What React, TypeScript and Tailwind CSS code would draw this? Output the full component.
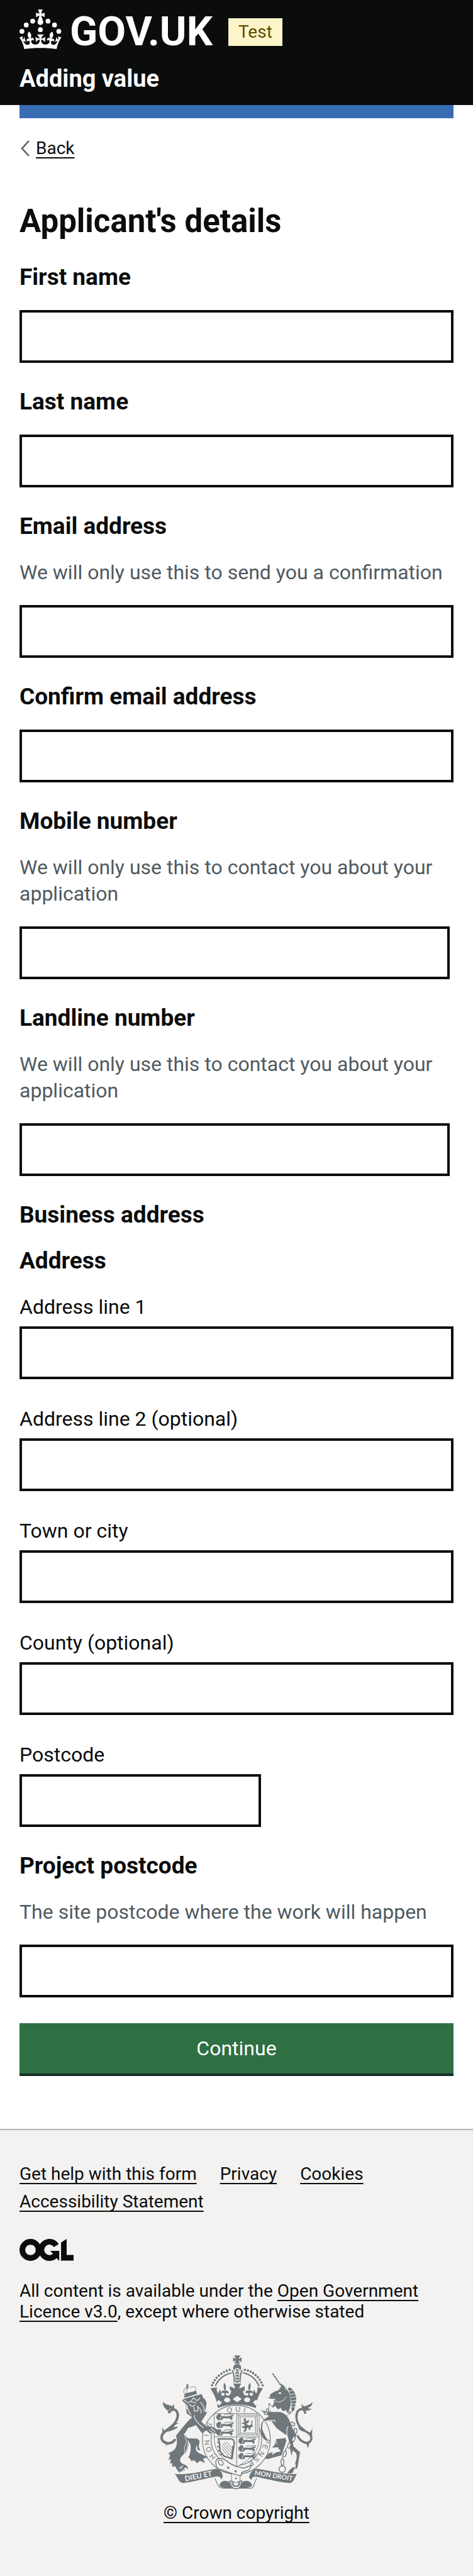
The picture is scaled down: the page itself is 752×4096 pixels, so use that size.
import React from "react";

const link = "underline decoration-2 underline-offset-[5px] [text-decoration-skip-ink:none]";

function Crown() {
  return (
    <svg aria-hidden="true" viewBox="0 0 64 60" className="h-[63px] w-[67px] shrink-0 fill-white">
      <circle cx="20" cy="17.6" r="3.7" />
      <circle cx="10.2" cy="23.5" r="3.7" />
      <circle cx="3.7" cy="33.2" r="3.7" />
      <circle cx="31.7" cy="30.6" r="3.7" />
      <circle cx="43.3" cy="17.6" r="3.7" />
      <circle cx="53.2" cy="23.5" r="3.7" />
      <circle cx="59.7" cy="33.2" r="3.7" />
      <path d="M33.1,9.8c.2-.1.3-.3.5-.5l4.6,2.4v-6.8l-4.6,1.5c-.1-.2-.3-.3-.5-.5l1.9-5.9h-6.7l1.9,5.9c-.2.1-.3.3-.5.5l-4.6-1.5v6.8l4.6-2.4c.1.2.3.3.5.5l-2.6,8c-.9,2.8,1.2,5.7,4.1,5.7h0c3,0,5.1-2.9,4.1-5.7l-2.6-8ZM37,37.9s-3.4,3.8-4.1,6.1c2.2,0,4.2-.5,6.4-2.8l-.7,8.5c-2-2.8-4.4-4.1-5.7-3.8.1,3.1.5,6.7,5.8,7.2,3.7.3,6.7-1.5,7-3.8.4-2.6-2-4.3-3.7-1.6-1.4-4.5,2.4-6.1,4.9-3.2-1.9-4.5-1.8-7.7,2.4-10.9,3,4,2.6,7.3-1.2,11.1,2.4-1.3,6.2,0,4,4.6-1.2-2.8-3.7-2.2-4.2.2-.3,1.7.7,3.7,3,4.2,1.9.3,4.7-.9,7-5.9-1.3,0-2.4.7-3.9,1.7l2.4-8c.6,2.3,1.4,3.7,2.2,4.5.6-1.6.5-2.8,0-5.3l5,1.8c-2.6,3.6-5.2,8.7-7.3,17.5-7.4-1.1-15.7-1.7-24.5-1.7h0c-8.8,0-17.1.6-24.5,1.7-2.1-8.9-4.7-13.9-7.3-17.5l5-1.8c-.5,2.5-.6,3.7,0,5.3.8-.8,1.6-2.3,2.2-4.5l2.4,8c-1.5-1-2.6-1.7-3.9-1.7,2.3,5,5.2,6.2,7,5.9,2.3-.4,3.3-2.4,3-4.2-.5-2.4-3-3.1-4.2-.2-2.2-4.6,1.6-6,4-4.6-3.7-3.7-4.2-7.1-1.2-11.1,4.2,3.2,4.3,6.4,2.4,10.9,2.5-2.8,6.3-1.3,4.9,3.2-1.8-2.7-4.1-1-3.7,1.6.3,2.3,3.3,4.1,7,3.8,5.4-.5,5.7-4.2,5.8-7.2-1.3-.2-3.7,1-5.7,3.8l-.7-8.5c2.2,2.3,4.2,2.7,6.4,2.8-.7-2.3-4.1-6.1-4.1-6.1h10.6,0Z" />
    </svg>
  );
}

/* Open Government Licence mark: a ring, an open ring with an arrow, and an angled bar */
function LicenceMark() {
  return (
    <svg role="img" aria-label="Open Government Licence" viewBox="0 0 483 196" className="h-[35px] w-[86px] fill-[#0b0c0c] stroke-[#0b0c0c]">
      <circle cx="98" cy="98" r="72.5" fill="none" strokeWidth="51" />
      <path d="M329 59A72.5 72.5 0 1 0 318 150" fill="none" strokeWidth="51" />
      <path stroke="none" d="M275 106h80v88h-3l-19-22-42 -22 8 -17z" />
      <path stroke="none" d="M371 32 421 0v143h62v51H371z" />
    </svg>
  );
}

const crownArc = [
  [438, 292], [446, 274], [457, 256], [470, 240], [485, 225], [502, 212], [520, 201], [539, 192], [559, 185],
  [663, 185], [684, 190], [703, 198], [720, 208], [737, 221], [752, 236], [765, 253], [776, 272], [785, 292],
];
const lionsAt = [
  [480, 492], [480, 546], [480, 598], [632, 655], [632, 708], [632, 760],
];

/* Passant lion used in the quarters of the shield */
function SmallLion({ x, y }: { x: number; y: number }) {
  return (
    <g transform={`translate(${x} ${y})`}>
      <path d="M-14 8l10-4 4-8 14 0 8 6-2 10-8 8 6 6-10 8-16-4-8-8 6-4z" />
      <path d="M18 14c20-8 40 4 60-4l22-8 6 8-14 6 8 8-6 14-12-4 4-8c-20 4-36-4-52 0l-8 12-14 2 8-12z" />
      <path d="M40 4c16-10 36 0 52-8 10-2 16 4 14 10" fill="none" stroke="#6f777b" strokeWidth="4" />
      <path d="M-8 32l14-4 10 8-14 4z" />
    </g>
  );
}

function RoyalArms() {
  return (
    <svg aria-hidden="true" viewBox="84 86 1044 918" className="h-[213px] w-[242px] fill-[#6f777b]">
      {/* crown */}
      <path d="M590 87h44c-8 8-12 16-13 24 6-2 12-6 20-12v34c-8-7-14-10-20-12 1 8 4 14 12 22h-44c8-8 11-14 12-22-6 2-12 5-18 12V99c7 6 12 10 18 12-1-8-4-16-11-24z" />
      <path d="M611 145c18 0 28 14 27 28-1 8-4 14-8 18-2-12-10-18-19-18s-17 6-19 18c-5-4-8-10-8-18 0-14 10-28 27-28z" />
      {crownArc.map(([x, y]) => <circle key={`${x}`} cx={x} cy={y} r="8" />)}
      {[188, 206, 226, 246, 266].map((y) => <rect key={y} x="603" y={y - 7} width="17" height="14" rx="5" />)}
      <g fill="none" stroke="#6f777b" strokeWidth="9">
        <path d="M461 296C480 252 520 216 572 206" />
        <path d="M762 300C742 252 702 214 650 206" />
        <path d="M576 188c14 22 15 50 15 84M645 188c-13 22-15 50-15 84" />
        <path d="M600 196v76M622 196v76" strokeWidth="3" />
      </g>
      <path d="M432 312l40-6c-4 12-2 30 8 42l14-28c10 28 4 44 20 44 12-2 14-18 2-22-6 0-10 6-12 8-8-16 8-30 22-20-10-20-12-40-4-56 12 14 16 34 6 56 14-8 30 4 22 22-4-10-14-10-18-2 0 10 8 16 18 12 16-4 18-20 20-36l-10 0v-28l36 16c-1-12-4-22-14-34h58c-10 12-14 22-14 34l36-16v36l-12-8c2 16 4 32 20 36 10 4 18-2 18-12-4-8-14-8-18 2-8-18 8-30 22-22-10-22-6-42 6-56 8 16 6 36-4 56 14-10 30 4 22 20-2-2-6-8-12-8-12 4-10 20 2 22 16 0 10-16 20-44l14 28c10-12 12-30 8-42l40 6c-24 30-44 80-50 136-40-18-90-24-130-24s-90 6-130 24c-6-56-30-106-52-136z" />
      <g fill="#f3f2f1">
        <ellipse cx="542" cy="392" rx="21" ry="16" />
        <ellipse cx="679" cy="391" rx="21" ry="16" />
        <path d="M582 386l29-20 29 20-29 20zM468 416l14-22 22 14-14 20zM756 412l-14-20-22 14 14 22z" stroke="#f3f2f1" strokeWidth="3" />
        <path d="M598 340l-22-8v-14l28 8-8-36h30l-8 36 28-8v14l-24 8 14 24h-50z" fill="#6f777b" />
      </g>
      {/* garter */}
      <ellipse cx="605" cy="665" rx="233" ry="236" fill="#f3f2f1" stroke="#6f777b" strokeWidth="5" />
      <ellipse cx="605" cy="665" rx="174" ry="176" fill="#f3f2f1" stroke="#6f777b" strokeWidth="5" />
      <g fontFamily="Liberation Sans, sans-serif" fontSize="48" textAnchor="middle">
        <text transform="translate(449 777) rotate(-128)" y="8">H</text>
        <text transform="translate(420 730) rotate(-112)" y="12">O</text>
        <text transform="translate(404 684) rotate(-98)" y="16">N</text>
        <text transform="translate(400 634) rotate(-86)" y="16">I</text>
        <text transform="translate(424 566) rotate(-62)" y="12">S</text>
        <text x="558" y="478" transform="rotate(-5 558 466)">Q</text>
        <text x="616" y="474">U</text>
        <text x="660" y="478" transform="rotate(12 660 466)">I</text>
        <text transform="translate(815 676) rotate(98)" y="16">P</text>
        <text transform="translate(802 714) rotate(110)" y="16">E</text>
        <text transform="translate(776 762) rotate(124)" y="16">N</text>
        <text transform="translate(742 800) rotate(138)" y="16">S</text>
        <text transform="translate(706 828) rotate(150)" y="16">E</text>
      </g>
      {/* shield */}
      <path d="M453 485h308v170c0 86-56 150-154 194-98-44-154-108-154-194z" fill="#f3f2f1" stroke="#6f777b" strokeWidth="4" />
      <path d="M607 485v360M453 646h308" fill="none" stroke="#6f777b" strokeWidth="4" />
      {lionsAt.map(([x, y]) => <SmallLion key={`${x}-${y}`} x={x} y={y} />)}
      <g fill="none" stroke="#6f777b" strokeWidth="4">
        <path d="M620 496h128v136H620zM632 508h104v112H632z" />
        <path d="M612 490l18 18M756 490l-18 18M612 638l18-18M756 638l-18-18" />
      </g>
      <path d="M652 524l12-8 8 10-6 10 22-4 8-12-8 28-16 8 20 12 18-8-4-18 10-14-2 28 4 18-18 10 2 14-14-2 4-12-18 2 2 14-14 12-10-4 12-14-8-12-10 4-2-12 20-4-8-14-10 2-4-12 20 0z" />
      <g fill="none" stroke="#6f777b">
        <path d="M482 660h88c14 0 18 8 20 22l-2 28-18 84-48-16-30-34-2-52z" strokeWidth="10" />
        <path d="M474 684h18M472 712h18M478 740h18M488 768h18" strokeWidth="8" />
        <path d="M508 690l66 70M520 682l56 60M536 678l44 46M506 708l60 66M506 728l50 54" strokeWidth="4" />
        <path d="M584 708l-10 90" strokeWidth="14" />
      </g>
      {/* lion supporter */}
      <g transform="translate(75 75)">
        <path d="M222 440C190 468 150 522 116 562c12 40 8 84-18 102l-34 18 12 14-12 32 16-6-4 32 14-4v28l18-8 16 26 16 22 8-14 14 6-2-14 20 4-12-16 20-2 12 14c0-22-12-32-42-42-20-16-18-36 0-52l12-14c28-24 26-34 32-68l-4-44-26-20 26-46 56-20 40 56 30-20 28 24 12-10 22 6c16-6 20-14 14-26l-34-18-46-6-30-30 42-66-34 2z" />
        <path d="M172 548l24 30 4 32-18 84c-12-36-12-60 8-86z" stroke="#f3f2f1" strokeWidth="4" />
        <path d="M190 580l72 2 16 16-6 40 10 26-18-4-6-34c-10 26-8 40 14 54l64 30-34 10 12 30-34-16-18 18-24-22-16 8c-4-14-14-22-22-26 12-18 20-50 16-88z" />
        <path d="M112 586c-32 46-80 28-92 2-14-40 30-60 58-82 40-30 62-78 44-108-14-26-48-14-56 10" fill="none" stroke="#6f777b" strokeWidth="17" />
        <path d="M26 328c24 34 54 14 78 46l-36 8 2 16c-30-20-44-34-44-70zM102 340l2 38-26-10c12-4 22-12 24-28zM22 502l2 54 24-18c-14-10-20-20-26-36zM62 512c20-26 42-38 74-36-22 8-30 14-36 30 10-6 22-6 30-4-18 18-42 24-74 34zM44 640l12-34 26 4c-16 8-30 14-38 30z" />
        <path d="M160 320l12-12 92-26 28-6 8 22c18 14 22 28 26 42l-6 34-8 38-40 18-36 12-46-32-12-70-20-18z" />
        <path d="M172 298l4-24 78-20 6 22-84 26z" />
        <path d="M174 274c-12-24 4-46 24-34m-8 34c-8-20 0-32 14-38m44 20c14-22-14-40-32-22" fill="none" stroke="#6f777b" strokeWidth="5" strokeDasharray="6 3" />
        <path d="M187 208l14 8-4 22-12-10 8-8z" stroke="#6f777b" strokeWidth="4" />
        <g fill="none" stroke="#f3f2f1" strokeWidth="5">
          <path d="M170 318l28 18 22-10 16-24 24 20 22-18M220 330l34 8M206 346l20 16 22-10M238 366l6 30 24-6-4-32M190 350c4 30 12 50 30 70M282 332c22 16 30 42 24 64M268 366c18 14 24 28 18 44M180 344l12 38M170 306l120-32" />
          <path d="M240 420c0 30 34 66 64 88M356 510l30 28M344 522l26 24" />
          <path d="M166 768l-26 20M156 790l-12-14" />
        </g>
      </g>
      {/* unicorn supporter */}
      <g transform="translate(600 75)">
        <path d="M234 288c6-18 28-26 60-38l14-10c14-14 24-6 30-20l12 24c26 26 34 76 26 116l-14 44-112-42 14-22-4-20 18-10-38-4z" />
        <path d="M216 298l28 2 20 10-26-2z" />
        <path d="M254 136l52 76" fill="none" stroke="#6f777b" strokeWidth="9" strokeDasharray="16 4" />
        <path d="M304 204l24 12 6 22-40 4 18-14zM358 236l16-4c34 22 48 66 38 106l-10 50-16 12-4-22c6-50-4-90-24-142z" />
        <g fill="none" stroke="#f3f2f1" strokeWidth="4">
          <path d="M362 258l42-8M370 280l44-6M376 302l40-8M380 324l38-6M382 346l32-4M382 366l26-2M264 322c26 16 62 10 84-26M340 228l4 22" />
        </g>
        <ellipse cx="304" cy="270" rx="9" ry="6" fill="#f3f2f1" />
        <path d="M228 340l6 48 112 32 36-14" fill="none" stroke="#6f777b" strokeWidth="5" />
        <path d="M232 340l22 28 18-12 18 24 20-10 16 24 18-10 14 22 24-10-34 32-114-32-8-14z" fill="#f3f2f1" stroke="#6f777b" strokeWidth="4" />
        <path d="M170 388l34 6 46 8c70-12 110 14 124 72l24 54 20 32c-22 26-30 50-20 76l44 40-8 46-10 60-14 12 2-28-4-14c10-20 14-46 8-68l-36-32c-14-46-16-68-24-88l-58-40c-22-16-40-44-50-62l-56-2c-14 30-12 60 0 80l14 30 16 24-28-8c-24-30-24-60-18-102 6-26 28-42 54-56z" />
        <path d="M276 586l68-8 4 22-24 68-8 28-94 26c24-26 42-46 90-52l-20-22z" />
        <path d="M268 586c10 26 6 36-20 58l44-2zM200 720l24-34 30-12-6 22-22 26zM352 820c20-24 34-44 58-44l-22 44zM370 640l14 60 10-44z" />
        <path d="M190 472c16-14 54-18 80-14M262 454l12 16M360 500c-22 30 4 56-14 88" fill="none" stroke="#f3f2f1" strokeWidth="5" />
        <path d="M424 560c20 48 74 70 94 30 8-26-8-42-44-62-50-26-68-88-50-130 18-26 50-24 54 14" fill="none" stroke="#6f777b" strokeWidth="15" />
        <path d="M526 330c-14 28-42 18-68 42l12 18c28 2 44-2 52-14-12 2-20 2-28-4 20-6 34-18 32-42zM452 340l2 36 22-12c-14-6-20-12-24-24zM426 494c18 6 34 6 48 26l-10 16-28-16zM526 512l-2 52-26-18c14-8 22-18 28-34zM496 650l-12-38 24-8z" />
        <g fill="#f3f2f1" stroke="#6f777b" strokeWidth="6">
          <circle cx="320" cy="792" r="22" />
          <rect x="312" y="724" width="18" height="40" rx="7" />
          <rect x="328" y="668" width="18" height="38" rx="7" transform="rotate(16 337 687)" />
          <rect x="358" y="612" width="18" height="36" rx="7" transform="rotate(24 367 630)" />
          <rect x="388" y="568" width="18" height="34" rx="7" transform="rotate(22 397 585)" />
          <rect x="402" y="512" width="18" height="34" rx="7" transform="rotate(-6 411 529)" />
          <rect x="376" y="472" width="30" height="20" rx="7" transform="rotate(30 391 482)" />
          <rect x="196" y="398" width="30" height="16" rx="7" transform="rotate(-20 211 406)" />
          <rect x="212" y="378" width="14" height="26" rx="6" />
        </g>
        <g fill="none" stroke="#6f777b" strokeWidth="6">
          <path d="M321 704l0 22M347 646l-6 24M377 598l-4 16M404 544l-4 24M320 764v8" />
        </g>
      </g>
      {/* ribbon */}
      <path d="M182 900c90 8 200-22 284-36 24 4 42 20 46 54l-10 22c-2-20-18-26-40-22-80 14-150 36-222 44-34-4-34-40-58-62z" />
      <path d="M1020 900c-90 4-186-22-270-36-32 0-54 30-58 62l18 16c0-22 14-28 40-22 74 16 146 36 222 42 28-2 32-38 48-62z" />
      <path d="M458 930c20 36 10 66 66 68h180c22 2 20-34 40-68" fill="none" stroke="#6f777b" strokeWidth="5" />
      <path d="M488 976c12-34 50-34 70-20l18 42c-40 0-76 0-88-22zM714 976c-14-34-50-34-70-20l-18 42c40 0 76 0 88-22z" />
      <g fill="#f3f2f1" fontFamily="Lato, sans-serif" fontWeight="700" fontSize="50">
        <text transform="translate(254 950) rotate(-11)">DIEU ET</text>
        <text transform="translate(728 906) rotate(9)" fontSize="45">MON DROIT</text>
      </g>
      {/* buckle */}
      <g fill="#f3f2f1" stroke="#6f777b" strokeWidth="6">
        <path d="M572 880v66l30 14 28-14v-50z" strokeWidth="4" />
        <path d="M466 806c14-20 44-12 64-2 36 34 78 50 126 56l52-20-14 30c-24 14-44 10-54 22l-2 20c-60-8-110-36-160-48-14-18-16-38-12-58z" />
        <ellipse cx="498" cy="822" rx="14" ry="20" transform="rotate(-40 498 822)" />
        <path d="M560 946c0 36 22 56 42 56s40-20 40-56l-16 8c8 18-4 32-24 32s-32-14-24-32z" />
        <path d="M588 952c-8 18 0 32 14 32s24-14 14-32" fill="none" />
      </g>
      <circle cx="549" cy="857" r="8" />
      <circle cx="600" cy="882" r="8" />
      <circle cx="602" cy="931" r="6" />
    </svg>
  );
}

type FieldProps = {
  id: string;
  label: string;
  hint?: string;
  type?: string;
  width?: string;
};

const box = "block h-[84px] border-4 border-[#0b0c0c] bg-white px-2 text-[32px]";

function Question({ id, label, hint, type = "text", width = "w-full" }: FieldProps) {
  return (
    <div>
      <h2 className="mb-[31px] text-[37px] leading-[42px] font-bold">
        <label htmlFor={id}>{label}</label>
      </h2>
      {hint && (
        <p id={`${id}-hint`} className="mb-[31px] text-[32px] leading-[42px] text-[#505a5f]">{hint}</p>
      )}
      <input id={id} type={type} aria-describedby={hint ? `${id}-hint` : undefined} className={`${box} ${width}`} />
    </div>
  );
}

function AddressLine({ id, label, width = "w-full" }: FieldProps) {
  return (
    <div>
      <label htmlFor={id} className="mb-[10px] block text-[32px] leading-[42px]">{label}</label>
      <input id={id} type="text" className={`${box} ${width}`} />
    </div>
  );
}

const phoneWidth = "w-full max-w-[684px]";
const contactHint = "We will only use this to contact you about your application";

export default function App() {
  return (
    <div className="min-h-screen bg-[#f3f2f1] font-['Roboto',sans-serif] text-[#0b0c0c]">
      <header className="bg-[#0b0c0c] px-[31px] pt-[15px] pb-[21px] text-white">
        <div className="flex items-start">
          <a href="#" className="flex items-start gap-[13px]">
            <Crown />
            <span className="text-[65px] leading-[70px] font-bold">GOV.UK</span>
          </a>
          <strong className="mt-[14px] ml-[25px] bg-[#fdf5c9] px-4 text-[28px] leading-[44px] font-normal text-[#594d00]">Test</strong>
        </div>
        <a href="#" className="mt-[19px] block text-[38px] leading-[42px] font-bold">Adding value</a>
      </header>

      <div className="bg-white px-[31px] pb-[84px]">
        <div className="h-[21px] bg-[#386db3]" />
        <div className="flex pt-[31px]">
          <a href="#" className="flex items-center text-[28px] leading-[34px]">
            <svg aria-hidden="true" viewBox="0 0 26 26" className="h-[26px] w-[26px] fill-none stroke-[#505a5f] stroke-[2.4]">
              <path d="M15 1 4 13 15 25" />
            </svg>
            <span className={link}>Back</span>
          </a>
        </div>

        <main className="pt-[73px]">
          <h1 className="mb-[42px] text-[51px] leading-[52px] font-bold">Applicant's details</h1>
          <form onSubmit={(event) => event.preventDefault()}>
            <div className="flex flex-col gap-[41px]">
              <Question id="first-name" label="First name" />
              <Question id="last-name" label="Last name" />
              <Question id="email" type="email" label="Email address" hint="We will only use this to send you a confirmation" />
              <Question id="confirm-email" type="email" label="Confirm email address" />
              <Question id="mobile" type="tel" label="Mobile number" hint={contactHint} width={phoneWidth} />
              <Question id="landline" type="tel" label="Landline number" hint={contactHint} width={phoneWidth} />
              <div>
                <h2 className="mb-[31px] text-[37px] leading-[42px] font-bold">Business address</h2>
                <h2 className="mb-[31px] text-[37px] leading-[42px] font-bold">Address</h2>
                <div className="flex flex-col gap-[42px]">
                  <AddressLine id="line-1" label="Address line 1" />
                  <AddressLine id="line-2" label="Address line 2 (optional)" />
                  <AddressLine id="town" label="Town or city" />
                  <AddressLine id="county" label="County (optional)" />
                  <AddressLine id="postcode" label="Postcode" width="w-full max-w-[384px]" />
                </div>
              </div>
              <Question id="project-postcode" label="Project postcode" hint="The site postcode where the work will happen" />
              <button type="submit" className="block h-[84px] w-full border-b-4 border-[#132f22] bg-[#2f6f44] text-[32px] leading-[42px] text-white">
                Continue
              </button>
            </div>
          </form>
        </main>
      </div>

      <footer className="border-t-2 border-[#b1b4b6] px-[31px] pt-[53px] pb-[80px] text-[28px]">
        <ul className="mb-[42px] flex flex-wrap gap-x-[37px] gap-y-[10px] leading-[34px]">
          {["Get help with this form", "Privacy", "Cookies", "Accessibility Statement"].map((text) => (
            <li key={text}>
              <a href="#" className={link}>{text}</a>
            </li>
          ))}
        </ul>
        <LicenceMark />
        <p className="mt-[31px] leading-[33px]">
          All content is available under the{" "}
          <a href="#" className={link}>Open Government Licence v3.0</a>, except where otherwise stated
        </p>
        <div className="mt-[53px] flex justify-center">
          <a href="#" className="flex flex-col items-center gap-[21px] leading-[34px]">
            <RoyalArms />
            <span className={link}>© Crown copyright</span>
          </a>
        </div>
      </footer>
    </div>
  );
}
